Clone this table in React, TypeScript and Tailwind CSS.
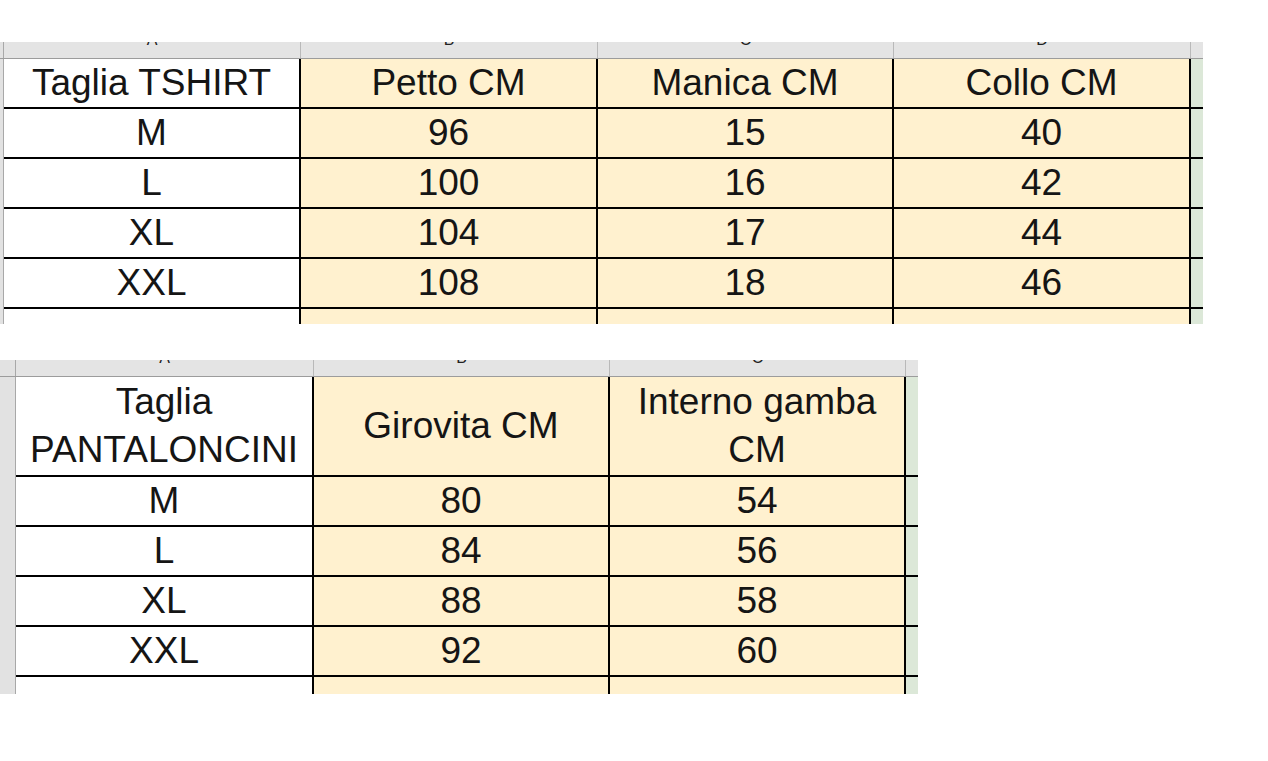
import type { ReactNode } from "react";

// ─── Size tables ──────────────────────────────────────────────────────────────

const tshirtRows = [
  ["M", "96", "15", "40"],
  ["L", "100", "16", "42"],
  ["XL", "104", "17", "44"],
  ["XXL", "108", "18", "46"],
];

const shortsRows = [
  ["M", "80", "54"],
  ["L", "84", "56"],
  ["XL", "88", "58"],
  ["XXL", "92", "60"],
];

const font = "font-['Liberation_Sans',Arial,sans-serif]";

// ─── Cells ────────────────────────────────────────────────────────────────────

interface CellProps {
  width: string;
  yellow?: boolean;
  children?: ReactNode;
}

function Cell({ width, yellow = false, children }: CellProps) {
  return (
    <div
      className={`${width} shrink-0 flex flex-col items-center justify-center border-r-2 border-b-2 border-black text-[37px] leading-[48px] text-[#151515] ${yellow ? "bg-[#fff1cf]" : "bg-white"}`}
    >
      {children}
    </div>
  );
}

function ColLetter({ width, letter }: { width: string; letter: string }) {
  return (
    <div
      className={`${width} shrink-0 flex justify-center overflow-hidden border-r border-[#b9b9b9] text-[16px] leading-none text-[#222]`}
    >
      <span className="-mt-[10px]">{letter}</span>
    </div>
  );
}

// ─── Sheet ────────────────────────────────────────────────────────────────────

interface SheetProps {
  rowHdr: string;
  cols: string[];
  headers: ReactNode[];
  headerHeight: string;
  tailHeight: string;
  rows: string[][];
}

function Sheet({ rowHdr, cols, headers, headerHeight, tailHeight, rows }: SheetProps) {
  const letters = ["A", "B", "C", "D"];
  const gray = `${rowHdr} shrink-0 bg-[#e2e2e2] border-r border-[#a8a8a8]`;
  const green = "w-[12px] shrink-0 bg-[#dce8d8] border-b-2 border-black";

  return (
    <div className={`flex flex-col ${font}`}>
      {/* column letters */}
      <div className="flex h-[17px] bg-[#e4e4e4] border-b border-[#9c9c9c]">
        <div className={gray} />
        {cols.map((w, i) => (
          <ColLetter key={i} width={w} letter={letters[i]} />
        ))}
        <div className="w-[12px] shrink-0" />
      </div>

      {/* header row */}
      <div className={`flex ${headerHeight}`}>
        <div className={gray} />
        {headers.map((h, i) => (
          <Cell key={i} width={cols[i]} yellow={i > 0}>
            {h}
          </Cell>
        ))}
        <div className={green} />
      </div>

      {/* data rows */}
      {rows.map((r, ri) => (
        <div key={ri} className="flex h-[50px]">
          <div className={gray} />
          {r.map((v, i) => (
            <Cell key={i} width={cols[i]} yellow={i > 0}>
              {v}
            </Cell>
          ))}
          <div className={green} />
        </div>
      ))}

      {/* partial row */}
      <div className={`flex ${tailHeight}`}>
        <div className={gray} />
        {cols.map((w, i) => (
          <div
            key={i}
            className={`${w} shrink-0 border-r-2 border-black ${i > 0 ? "bg-[#fff1cf]" : "bg-white"}`}
          />
        ))}
        <div className="w-[12px] shrink-0 bg-[#dce8d8]" />
      </div>
    </div>
  );
}

// ─── App ──────────────────────────────────────────────────────────────────────

export default function App() {
  return (
    <div className="w-[1268px] h-[761px] bg-white overflow-hidden pt-[42px]">
      <div className="w-[1203px]">
        <Sheet
          rowHdr="w-[4px]"
          cols={["w-[297px]", "w-[297px]", "w-[296px]", "w-[297px]"]}
          headerHeight="h-[50px]"
          tailHeight="h-[15px]"
          headers={["Taglia TSHIRT", "Petto CM", "Manica CM", "Collo CM"]}
          rows={tshirtRows}
        />
      </div>

      <div className="w-[918px] mt-[36px]">
        <Sheet
          rowHdr="w-[16px]"
          cols={["w-[298px]", "w-[296px]", "w-[296px]"]}
          headerHeight="h-[100px]"
          tailHeight="h-[17px]"
          headers={[
            <>
              <span>Taglia</span>
              <span>PANTALONCINI</span>
            </>,
            "Girovita CM",
            <>
              <span>Interno gamba</span>
              <span>CM</span>
            </>,
          ]}
          rows={shortsRows}
        />
      </div>
    </div>
  );
}
